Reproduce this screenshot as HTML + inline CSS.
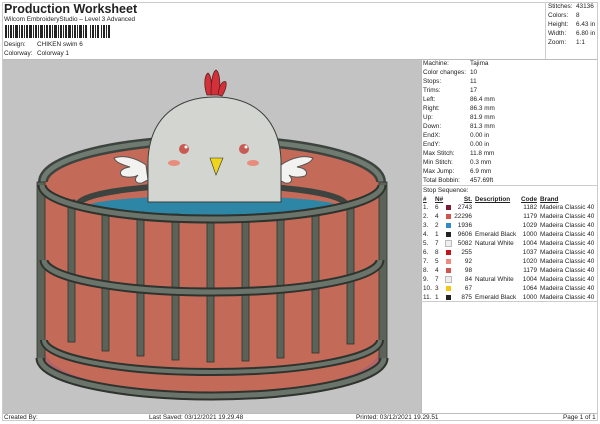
<!DOCTYPE html><html><head><style>
body{margin:0;width:600px;height:424px;background:#fff;font-family:"Liberation Sans",sans-serif;color:#222;position:relative;overflow:hidden}
.t{position:absolute;font-size:6.4px;white-space:nowrap;line-height:9px}
.r{text-align:right}
.sw{position:absolute;width:5px;height:5px}
</style></head><body>
<div style="position:absolute;left:2px;top:2px;width:596px;height:419px;border:1px solid #ccc;box-sizing:border-box"></div>
<div class="t" style="left:4px;top:2px;font-size:12.5px;font-weight:bold;line-height:15px">Production Worksheet</div>
<div class="t" style="left:4px;top:15px">Wilcom EmbroideryStudio – Level 3 Advanced</div>
<svg style="position:absolute;left:5px;top:25px" width="106" height="13">
<g fill="#222">
<rect x="0" width="2" height="13"/><rect x="3" width="1" height="13"/><rect x="5" width="2" height="13"/><rect x="8" width="1" height="13"/><rect x="10" width="3" height="13"/><rect x="14" width="1" height="13"/><rect x="16" width="2" height="13"/><rect x="19" width="1" height="13"/><rect x="21" width="2" height="13"/><rect x="24" width="3" height="13"/><rect x="28" width="1" height="13"/><rect x="30" width="2" height="13"/><rect x="33" width="1" height="13"/><rect x="35" width="3" height="13"/><rect x="39" width="1" height="13"/><rect x="41" width="2" height="13"/><rect x="44" width="2" height="13"/><rect x="47" width="1" height="13"/><rect x="49" width="3" height="13"/><rect x="53" width="1" height="13"/><rect x="55" width="2" height="13"/><rect x="58" width="1" height="13"/><rect x="60" width="2" height="13"/><rect x="63" width="3" height="13"/><rect x="67" width="1" height="13"/><rect x="69" width="2" height="13"/><rect x="72" width="1" height="13"/><rect x="74" width="3" height="13"/><rect x="78" width="1" height="13"/><rect x="80" width="2" height="13"/><rect x="85" width="1" height="13"/><rect x="87" width="2" height="13"/><rect x="90" width="1" height="13"/><rect x="92" width="2" height="13"/><rect x="96" width="1" height="13"/><rect x="98" width="2" height="13"/><rect x="101" width="1" height="13"/><rect x="103" width="2" height="13"/>
</g></svg>
<div class="t" style="left:4px;top:40px">Design:</div><div class="t" style="left:37px;top:40px">CHIKEN swim 6</div>
<div class="t" style="left:4px;top:49px">Colorway:</div><div class="t" style="left:37px;top:49px">Colorway 1</div>
<div style="position:absolute;left:545px;top:2px;width:1px;height:57px;background:#ccc"></div>
<div class="t" style="left:548px;top:2px">Stitches:</div><div class="t" style="left:576px;top:2px">43136</div>
<div class="t" style="left:548px;top:11px">Colors:</div><div class="t" style="left:576px;top:11px">8</div>
<div class="t" style="left:548px;top:20px">Height:</div><div class="t" style="left:576px;top:20px">6.43 in</div>
<div class="t" style="left:548px;top:29px">Width:</div><div class="t" style="left:576px;top:29px">6.80 in</div>
<div class="t" style="left:548px;top:38px">Zoom:</div><div class="t" style="left:576px;top:38px">1:1</div>
<div style="position:absolute;left:3px;top:59px;width:594px;height:1px;background:#bbb"></div>
<svg style="position:absolute;left:3px;top:60px" width="418" height="353" viewBox="3 60 418 353">
<rect x="3" y="60" width="418" height="353" fill="#c3c3c3"/>
<path d="M43 182 A169 40 0 0 1 381 182 L381 360 A169 38 0 0 1 43 360Z" fill="#c46a58"/>
<path d="M43 182 A169 42 0 0 1 381 182" fill="none" stroke="#3d443f" stroke-width="10"/>
<path d="M43 182 A169 42 0 0 1 381 182" fill="none" stroke="#6f7a70" stroke-width="5"/>
<g fill="#f2f2f0" stroke="#555" stroke-width="1">
<path d="M146 165 C135 157 122 155 114 158 C116 163 124 165 130 167 C122 168 118 172 122 176 C128 178 136 177 138 175 C133 180 136 184 142 183 L148 180Z"/>
<path d="M281 165 C292 157 305 155 313 158 C311 163 303 165 297 167 C305 168 309 172 305 176 C299 178 291 177 289 175 C294 180 291 184 285 183 L279 180Z"/>
</g>
<path d="M78 205 A134 20 0 0 1 346 205" fill="none" stroke="#3d443f" stroke-width="6"/>
<ellipse cx="213" cy="206" rx="124" ry="10" fill="#2e86a6"/>
<g fill="#d3303a" stroke="#5a2020" stroke-width=".8">
<path d="M207 95 C203 84 205 75 208 73 C211 75 212 84 212 95Z"/>
<path d="M211 95 C211 80 213 72 216 70 C219 72 221 80 219 95Z"/>
<path d="M218 95 C219 85 223 80 226 82 C227 87 224 93 222 96Z"/>
</g>
<path d="M148 202 L148 160 C150 115 180 97 215 97 C250 97 279 115 281 160 L281 202Z" fill="#d2d5d0" stroke="#3a3d3a" stroke-width="1"/>
<circle cx="184" cy="149" r="5" fill="#c85c55"/><circle cx="186" cy="147" r="1.5" fill="#fff"/>
<circle cx="244" cy="149" r="5" fill="#c85c55"/><circle cx="246" cy="147" r="1.5" fill="#fff"/>
<ellipse cx="174" cy="163" rx="6" ry="3" fill="#e88d7d"/><ellipse cx="253" cy="163" rx="6" ry="3" fill="#e88d7d"/>
<path d="M210 158 L223 158 L216 175Z" fill="#f0d41c" stroke="#333" stroke-width=".6"/>
<path d="M45 350 A167 44 0 0 0 379 350 L379 362 A167 38 0 0 1 45 362Z" fill="#b0646a"/>
<g fill="#5b6359" stroke="#2e332e" stroke-width=".8">
<rect x="68" y="200" width="7" height="142"/><rect x="102" y="208" width="7" height="143"/><rect x="137" y="212" width="7" height="144"/><rect x="172" y="214" width="7" height="146"/><rect x="207" y="215" width="7" height="147"/><rect x="242" y="215" width="7" height="146"/><rect x="277" y="213" width="7" height="145"/><rect x="312" y="210" width="7" height="143"/><rect x="347" y="204" width="7" height="140"/>
</g>
<rect x="37" y="182" width="8" height="180" fill="#5b6359" stroke="#2e332e" stroke-width=".8"/>
<rect x="379" y="182" width="8" height="180" fill="#5b6359" stroke="#2e332e" stroke-width=".8"/>
<g fill="none">
<path d="M42 185 A170 34 0 0 0 382 185" stroke="#2e332e" stroke-width="9"/>
<path d="M42 185 A170 34 0 0 0 382 185" stroke="#6a746a" stroke-width="5"/>
<path d="M44 260 A168 32 0 0 0 380 260" stroke="#2e332e" stroke-width="9"/>
<path d="M44 260 A168 32 0 0 0 380 260" stroke="#6a746a" stroke-width="5"/>
<path d="M44 340 A168 32 0 0 0 380 340" stroke="#2e332e" stroke-width="8"/>
<path d="M44 340 A168 32 0 0 0 380 340" stroke="#6a746a" stroke-width="4"/>
<path d="M40 358 A172 38 0 0 0 384 358" stroke="#2e332e" stroke-width="9"/>
<path d="M40 358 A172 38 0 0 0 384 358" stroke="#6a746a" stroke-width="5"/>
</g>
</svg>
<div style="position:absolute;left:421px;top:60px;width:1px;height:353px;background:#bbb"></div>
<div class="t" style="left:423px;top:59px">Machine:</div><div class="t" style="left:470px;top:59px">Tajima</div>
<div class="t" style="left:423px;top:68px">Color changes:</div><div class="t" style="left:470px;top:68px">10</div>
<div class="t" style="left:423px;top:77px">Stops:</div><div class="t" style="left:470px;top:77px">11</div>
<div class="t" style="left:423px;top:86px">Trims:</div><div class="t" style="left:470px;top:86px">17</div>
<div class="t" style="left:423px;top:95px">Left:</div><div class="t" style="left:470px;top:95px">86.4 mm</div>
<div class="t" style="left:423px;top:104px">Right:</div><div class="t" style="left:470px;top:104px">86.3 mm</div>
<div class="t" style="left:423px;top:113px">Up:</div><div class="t" style="left:470px;top:113px">81.9 mm</div>
<div class="t" style="left:423px;top:122px">Down:</div><div class="t" style="left:470px;top:122px">81.3 mm</div>
<div class="t" style="left:423px;top:131px">EndX:</div><div class="t" style="left:470px;top:131px">0.00 in</div>
<div class="t" style="left:423px;top:140px">EndY:</div><div class="t" style="left:470px;top:140px">0.00 in</div>
<div class="t" style="left:423px;top:149px">Max Stitch:</div><div class="t" style="left:470px;top:149px">11.8 mm</div>
<div class="t" style="left:423px;top:158px">Min Stitch:</div><div class="t" style="left:470px;top:158px">0.3 mm</div>
<div class="t" style="left:423px;top:167px">Max Jump:</div><div class="t" style="left:470px;top:167px">6.9 mm</div>
<div class="t" style="left:423px;top:176px">Total Bobbin:</div><div class="t" style="left:470px;top:176px">457.69ft</div>
<div style="position:absolute;left:421px;top:185px;width:177px;height:1px;background:#ccc"></div>
<div class="t" style="left:423px;top:186px">Stop Sequence:</div>
<div class="t" style="left:423px;top:195px;font-weight:bold;text-decoration:underline">#</div>
<div class="t" style="left:435px;top:195px;font-weight:bold;text-decoration:underline">N#</div>
<div class="t r" style="left:450px;width:22px;top:195px;font-weight:bold;text-decoration:underline">St.</div>
<div class="t" style="left:475px;top:195px;font-weight:bold;text-decoration:underline">Description</div>
<div class="t r" style="left:515px;width:22px;top:195px;font-weight:bold;text-decoration:underline">Code</div>
<div class="t" style="left:540px;top:195px;font-weight:bold;text-decoration:underline">Brand</div>
<div style="position:absolute;left:421px;top:301px;width:177px;height:1px;background:#ccc"></div>
<div style="position:absolute;left:3px;top:413px;width:594px;height:1px;background:#bbb"></div>
<div class="t" style="left:4px;top:413px">Created By:</div>
<div class="t" style="left:149px;top:413px">Last Saved: 03/12/2021 19.29.48</div>
<div class="t" style="left:356px;top:413px">Printed: 03/12/2021 19.29.51</div>
<div class="t" style="left:563px;top:413px">Page 1 of 1</div>
<div style="position:absolute;left:0;top:203px">
<div class="t" style="left:423px;top:0">1.</div><div class="t" style="left:435px;top:0">6</div><div class="sw" style="left:446px;top:2px;background:#7a1f33"></div><div class="t r" style="left:440px;width:32px;top:0">2743</div><div class="t r" style="left:505px;width:32px;top:0">1182</div><div class="t" style="left:540px;top:0">Madeira Classic 40</div>
<div class="t" style="left:423px;top:9px">2.</div><div class="t" style="left:435px;top:9px">4</div><div class="sw" style="left:446px;top:11px;background:#d2544f"></div><div class="t r" style="left:440px;width:32px;top:9px">22296</div><div class="t r" style="left:505px;width:32px;top:9px">1179</div><div class="t" style="left:540px;top:9px">Madeira Classic 40</div>
<div class="t" style="left:423px;top:18px">3.</div><div class="t" style="left:435px;top:18px">2</div><div class="sw" style="left:446px;top:20px;background:#2f8ac9"></div><div class="t r" style="left:440px;width:32px;top:18px">1936</div><div class="t r" style="left:505px;width:32px;top:18px">1029</div><div class="t" style="left:540px;top:18px">Madeira Classic 40</div>
<div class="t" style="left:423px;top:27px">4.</div><div class="t" style="left:435px;top:27px">1</div><div class="sw" style="left:446px;top:29px;background:#222"></div><div class="t r" style="left:440px;width:32px;top:27px">9606</div><div class="t" style="left:475px;top:27px">Emerald Black</div><div class="t r" style="left:505px;width:32px;top:27px">1000</div><div class="t" style="left:540px;top:27px">Madeira Classic 40</div>
<div class="t" style="left:423px;top:36px">5.</div><div class="t" style="left:435px;top:36px">7</div><div class="sw" style="left:446px;top:38px;background:#eee;outline:1px solid #bbb"></div><div class="t r" style="left:440px;width:32px;top:36px">5082</div><div class="t" style="left:475px;top:36px">Natural White</div><div class="t r" style="left:505px;width:32px;top:36px">1004</div><div class="t" style="left:540px;top:36px">Madeira Classic 40</div>
<div class="t" style="left:423px;top:45px">6.</div><div class="t" style="left:435px;top:45px">8</div><div class="sw" style="left:446px;top:47px;background:#c4141e"></div><div class="t r" style="left:440px;width:32px;top:45px">255</div><div class="t r" style="left:505px;width:32px;top:45px">1037</div><div class="t" style="left:540px;top:45px">Madeira Classic 40</div>
<div class="t" style="left:423px;top:54px">7.</div><div class="t" style="left:435px;top:54px">5</div><div class="sw" style="left:446px;top:56px;background:#f08a80"></div><div class="t r" style="left:440px;width:32px;top:54px">92</div><div class="t r" style="left:505px;width:32px;top:54px">1020</div><div class="t" style="left:540px;top:54px">Madeira Classic 40</div>
<div class="t" style="left:423px;top:63px">8.</div><div class="t" style="left:435px;top:63px">4</div><div class="sw" style="left:446px;top:65px;background:#d2544f"></div><div class="t r" style="left:440px;width:32px;top:63px">98</div><div class="t r" style="left:505px;width:32px;top:63px">1179</div><div class="t" style="left:540px;top:63px">Madeira Classic 40</div>
<div class="t" style="left:423px;top:72px">9.</div><div class="t" style="left:435px;top:72px">7</div><div class="sw" style="left:446px;top:74px;background:#eee;outline:1px solid #bbb"></div><div class="t r" style="left:440px;width:32px;top:72px">84</div><div class="t" style="left:475px;top:72px">Natural White</div><div class="t r" style="left:505px;width:32px;top:72px">1004</div><div class="t" style="left:540px;top:72px">Madeira Classic 40</div>
<div class="t" style="left:423px;top:81px">10.</div><div class="t" style="left:435px;top:81px">3</div><div class="sw" style="left:446px;top:83px;background:#f5c518"></div><div class="t r" style="left:440px;width:32px;top:81px">67</div><div class="t r" style="left:505px;width:32px;top:81px">1064</div><div class="t" style="left:540px;top:81px">Madeira Classic 40</div>
<div class="t" style="left:423px;top:90px">11.</div><div class="t" style="left:435px;top:90px">1</div><div class="sw" style="left:446px;top:92px;background:#222"></div><div class="t r" style="left:440px;width:32px;top:90px">875</div><div class="t" style="left:475px;top:90px">Emerald Black</div><div class="t r" style="left:505px;width:32px;top:90px">1000</div><div class="t" style="left:540px;top:90px">Madeira Classic 40</div>
</div>
</body></html>
